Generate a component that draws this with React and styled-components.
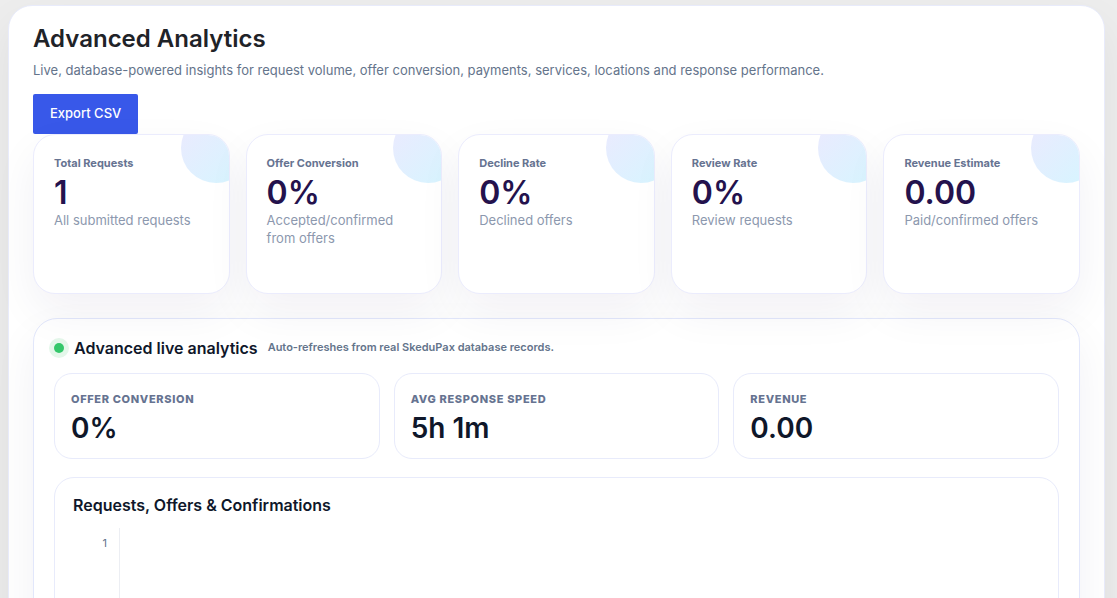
import React from "react";
import styled, { createGlobalStyle } from "styled-components";

const GlobalStyle = createGlobalStyle`
  * {
    box-sizing: border-box;
  }

  body {
    margin: 0;
    background: #ededed;
    color: #1f2328;
    font-family: Inter, "Liberation Sans", sans-serif;
  }
`;

const Page = styled.main`
  padding: 5px 12px 24px 8px;
`;

const Panel = styled.section`
  padding: 17px 24px 24px;
  border: 1px solid #e8ebfb;
  border-radius: 24px;
  background: #fff;
  box-shadow: 0 18px 45px rgba(15, 23, 42, 0.06);
`;

const Title = styled.h1`
  margin: 0;
  font-size: 24px;
  font-weight: 600;
  line-height: 32px;
`;

const Lead = styled.p`
  margin: 5px 0 14px;
  color: #64748b;
  font-size: 13px;
  line-height: 20px;
`;

const ExportButton = styled.button`
  display: block;
  height: 40px;
  padding: 0 17px 2px;
  border: 0;
  border-radius: 2px;
  background: #3858e9;
  color: #fff;
  font: 500 13px Inter, "Liberation Sans", sans-serif;
  cursor: pointer;
`;

const StatGrid = styled.div`
  display: grid;
  grid-template-columns: repeat(5, 1fr);
  gap: 16px;
`;

const StatCard = styled.article`
  position: relative;
  min-height: 160px;
  padding: 20px;
  overflow: hidden;
  border: 1px solid #ebecfd;
  border-radius: 22px;
  background: #fff;
  box-shadow: 0 18px 45px rgba(36, 18, 77, 0.06);

  &::after {
    content: "";
    position: absolute;
    top: -22px;
    right: -22px;
    width: 70px;
    height: 70px;
    border-radius: 50%;
    background: linear-gradient(135deg, #ede9fe, #d4f6ff);
  }
`;

const StatLabel = styled.h2`
  margin: 0;
  color: #667391;
  font-size: 11px;
  font-weight: 700;
  line-height: 16px;
`;

const StatValue = styled.div`
  margin: 6px 0 2px;
  color: #24124d;
  font-size: 32px;
  font-weight: 600;
  line-height: 32px;
`;

const StatNote = styled.div`
  color: #8c98ae;
  font-size: 13px;
  line-height: 18px;
`;

const LivePanel = styled.section`
  margin-top: 24px;
  padding: 20px;
  border: 1px solid #e2e7fb;
  border-radius: 24px;
  background: #fff;
  box-shadow: 0 18px 45px rgba(36, 18, 77, 0.06);
`;

const LiveHeader = styled.header`
  display: flex;
  align-items: center;
  gap: 10px;
  margin-bottom: 16px;
`;

const LiveDot = styled.span`
  width: 10px;
  height: 10px;
  border-radius: 50%;
  background: #34c76a;
  box-shadow: 0 0 0 5px #e4f7ea;
`;

const SectionTitle = styled.h2`
  margin: 0;
  color: #0f172a;
  font-size: 16px;
  font-weight: 600;
  line-height: 18px;
`;

const LiveNote = styled.small`
  padding-bottom: 2px;
  color: #64748b;
  font-size: 11px;
  font-weight: 600;
  line-height: 16px;
`;

const MetricGrid = styled.div`
  display: grid;
  grid-template-columns: repeat(3, 1fr);
  gap: 14px;
`;

const Metric = styled.div`
  padding: 16px;
  border: 1px solid #e8ebfb;
  border-radius: 18px;
`;

const MetricLabel = styled.div`
  color: #667391;
  font-size: 11px;
  font-weight: 800;
  letter-spacing: 0.06em;
  line-height: 18px;
  text-transform: uppercase;
`;

const MetricValue = styled.div`
  margin-top: 6px;
  color: #0f172a;
  font-size: 28px;
  font-weight: 600;
  line-height: 28px;
`;

const ChartCard = styled.section`
  margin-top: 18px;
  padding: 18px;
  border: 1px solid #e8ebfb;
  border-radius: 20px;
`;

const Chart = styled.svg`
  display: block;
  width: 100%;
  height: 240px;
  margin-top: 14px;
`;

const stats = [
  { label: "Total Requests", value: "1", note: "All submitted requests" },
  {
    label: "Offer Conversion",
    value: "0%",
    note: "Accepted/confirmed from offers",
  },
  { label: "Decline Rate", value: "0%", note: "Declined offers" },
  { label: "Review Rate", value: "0%", note: "Review requests" },
  { label: "Revenue Estimate", value: "0.00", note: "Paid/confirmed offers" },
];

const metrics = [
  { label: "Offer conversion", value: "0%" },
  { label: "Avg response speed", value: "5h 1m" },
  { label: "Revenue", value: "0.00" },
];

function RequestsChart() {
  return (
    <Chart role="img" aria-label="Requests, Offers & Confirmations">
      <line x1="46.5" y1="0" x2="46.5" y2="240" stroke="#eceef3" />
      <text x="34" y="19" textAnchor="end" fontSize="11" fill="#64748b">
        1
      </text>
    </Chart>
  );
}

function App() {
  return (
    <>
      <GlobalStyle />
      <Page>
        <Panel>
          <Title>Advanced Analytics</Title>
          <Lead>
            Live, database-powered insights for request volume, offer
            conversion, payments, services, locations and response performance.
          </Lead>
          <ExportButton type="button">Export CSV</ExportButton>

          <StatGrid>
            {stats.map(({ label, value, note }) => (
              <StatCard key={label}>
                <StatLabel>{label}</StatLabel>
                <StatValue>{value}</StatValue>
                <StatNote>{note}</StatNote>
              </StatCard>
            ))}
          </StatGrid>

          <LivePanel>
            <LiveHeader>
              <LiveDot />
              <SectionTitle>Advanced live analytics</SectionTitle>
              <LiveNote>
                Auto-refreshes from real SkeduPax database records.
              </LiveNote>
            </LiveHeader>

            <MetricGrid>
              {metrics.map(({ label, value }) => (
                <Metric key={label}>
                  <MetricLabel>{label}</MetricLabel>
                  <MetricValue>{value}</MetricValue>
                </Metric>
              ))}
            </MetricGrid>

            <ChartCard>
              <SectionTitle>Requests, Offers &amp; Confirmations</SectionTitle>
              <RequestsChart />
            </ChartCard>
          </LivePanel>
        </Panel>
      </Page>
    </>
  );
}

export default App;
